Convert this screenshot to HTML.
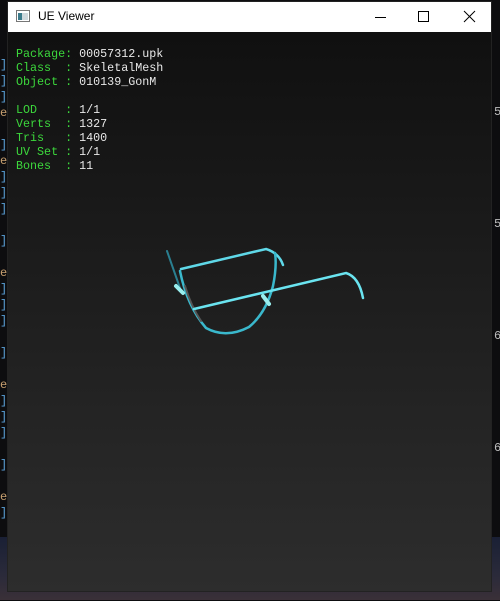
<!DOCTYPE html>
<html><head><style>
body{margin:0;width:500px;height:600px;overflow:hidden;background:#0d0d0f;position:relative;font-family:"Liberation Sans",sans-serif}
.desk{position:absolute;left:0;top:537px;width:500px;height:63px;background:linear-gradient(#1a2035,#2a2a3a 60%,#3a3038)}
.win{position:absolute;left:7px;top:1px;width:485px;height:591px;background:#2e2e2e;border:1px solid #222;box-sizing:border-box}
.title{position:absolute;left:0;top:0;width:100%;height:30px;background:#fff}
.title span{position:absolute;left:30px;top:7px;font-size:12px;color:#000}
.content{position:absolute;left:0;top:30px;width:100%;bottom:0;background:linear-gradient(#101010,#2d2d2d)}
.txt{position:absolute;left:8px;top:15px;font-family:"Liberation Mono",monospace;font-size:11.7px;line-height:14px;color:#e8e8e8;white-space:pre}
.g{color:#3cd83c}
.lb{position:absolute;left:0;width:7px;color:#5aa0d8;font-family:"Liberation Mono",monospace;font-size:12px}
.rb{position:absolute;left:494px;color:#bbb;font-family:"Liberation Mono",monospace;font-size:12px}
</style></head><body>
<div class="desk"></div>
<div class="lb" style="top:58px">]</div><div class="lb" style="top:74px">]</div><div class="lb" style="top:90px">]</div>
<div class="lb" style="top:106px;color:#c8a070">e</div>
<div class="lb" style="top:138px">]</div><div class="lb" style="top:154px;color:#c8a070">e</div>
<div class="lb" style="top:170px">]</div><div class="lb" style="top:186px">]</div><div class="lb" style="top:202px">]</div>
<div class="lb" style="top:234px">]</div><div class="lb" style="top:266px;color:#c8a070">e</div>
<div class="lb" style="top:282px">]</div><div class="lb" style="top:298px">]</div><div class="lb" style="top:314px">]</div>
<div class="lb" style="top:346px">]</div><div class="lb" style="top:378px;color:#c8a070">e</div>
<div class="lb" style="top:394px">]</div><div class="lb" style="top:410px">]</div><div class="lb" style="top:426px">]</div>
<div class="lb" style="top:458px">]</div><div class="lb" style="top:490px;color:#c8a070">e</div>
<div class="lb" style="top:506px">]</div>
<div class="rb" style="top:105px">5</div><div class="rb" style="top:217px">5</div><div class="rb" style="top:329px">6</div><div class="rb" style="top:441px">6</div>
<div class="win">
<div class="title">
<svg style="position:absolute;left:8px;top:8px" width="14" height="12"><rect x="0.5" y="0.5" width="13" height="11" fill="#fff" stroke="#777"/><rect x="2" y="3" width="4" height="7" fill="#3a7a8a"/><rect x="6" y="3" width="6" height="7" fill="#cfd8dc"/></svg>
<span>UE Viewer</span>
<svg style="position:absolute;left:366px;top:8px" width="14" height="14"><line x1="1" y1="7.5" x2="12" y2="7.5" stroke="#000"/></svg>
<svg style="position:absolute;left:409px;top:8px" width="14" height="14"><rect x="1.5" y="1.5" width="10" height="10" fill="none" stroke="#000"/></svg>
<svg style="position:absolute;left:455px;top:8px" width="14" height="14"><path d="M1 1L12 12M12 1L1 12" stroke="#000"/></svg>
</div>
<div class="content">
<div class="txt"><span class="g">Package:</span> 00057312.upk
<span class="g">Class  :</span> SkeletalMesh
<span class="g">Object :</span> 010139_GonM

<span class="g">LOD    :</span> 1/1
<span class="g">Verts  :</span> 1327
<span class="g">Tris   :</span> 1400
<span class="g">UV Set :</span> 1/1
<span class="g">Bones  :</span> 11</div>
</div>
<svg style="position:absolute;left:-7px;top:-1px" width="500" height="600">
<g fill="none" stroke-linecap="round">
<path d="M166 250L180 290" stroke="#2a7f90" stroke-width="2"/>
<path d="M180 268L265 248Q278 252 282 264" stroke="#5fd8e8" stroke-width="2.5"/>
<path d="M179 270Q186 305 205 327Q225 338 248 326Q265 312 272 285Q276 265 274 252" stroke="#3ab8cc" stroke-width="2.5"/>
<path d="M184 285Q190 305 200 320" stroke="#555" stroke-width="2"/>
<path d="M193 308L345 272Q358 276 362 297" stroke="#6ae4f0" stroke-width="2.5"/>
<path d="M175 285L182 292M262 295L268 303" stroke="#9ee" stroke-width="4"/>
</g></svg>
</div>
</body></html>
